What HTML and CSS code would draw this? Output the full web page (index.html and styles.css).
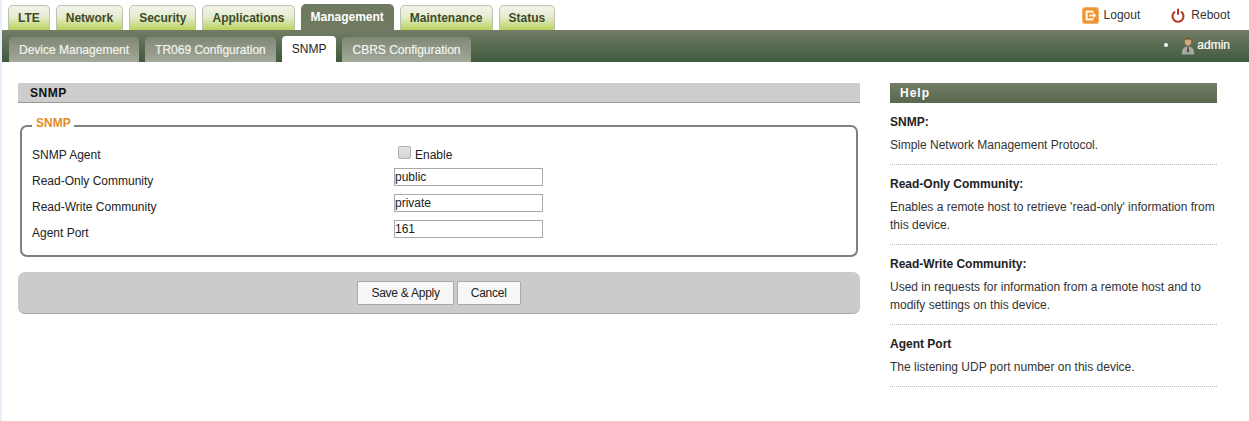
FILE: index.html
```html
<!DOCTYPE html>
<html lang="en">
<head>
<meta charset="utf-8">
<title>SNMP</title>
<link rel="stylesheet" href="styles.css">
</head>
<body>
<div class="page">
  <header>
    <div class="topbar">
      <nav class="tabs">
        <a class="tab">LTE</a>
        <a class="tab">Network</a>
        <a class="tab">Security</a>
        <a class="tab">Applications</a>
        <a class="tab active">Management</a>
        <a class="tab">Maintenance</a>
        <a class="tab">Status</a>
      </nav>
      <div class="actions">
        <a class="action logout">
          <svg class="icon" width="17" height="17" viewBox="0 0 17 17"><rect x="0.6" y="0.6" width="15.8" height="15.800" rx="2.5" fill="#eb8f2e" stroke="#f3b26a" stroke-width="1.2"/><path d="M3.500 3.500h8v2.200H5.700v5.600h5.800v2.200h-8z" fill="#fff3e0"/><path d="M7 7.400h4.200V5.500l3.300 3-3.300 3V9.600H7z" fill="#fff3e0"/></svg>
          Logout
        </a>
        <a class="action reboot">
          <svg class="icon" width="14" height="15" viewBox="0 0 14 15"><path d="M4 3.600a5.500 5.500 0 1 0 6 0" fill="none" stroke="#b5311f" stroke-width="2"/><path d="M7 .8v6" stroke="#b5311f" stroke-width="2"/></svg>
          Reboot
        </a>
      </div>
    </div>
    <div class="subbar">
      <nav class="subtabs">
        <a class="subtab">Device Management</a>
        <a class="subtab">TR069 Configuration</a>
        <a class="subtab active">SNMP</a>
        <a class="subtab">CBRS Configuration</a>
      </nav>
      <div class="user">
        <span class="dot"></span>
        <svg class="usericon" width="14" height="19" viewBox="0 0 14 19"><ellipse cx="7" cy="5.500" rx="3.200" ry="4" fill="#d9a77c"/><path d="M3.800 4.800C3.600 .2 10.400 .2 10.200 4.800 9 3.200 5 3.200 3.800 4.800z" fill="#7d5230"/><path d="M.8 18.500c0-5.500 2.200-8 6.200-8s6.200 2.500 6.200 8z" fill="#a3aba3"/><path d="M6.400 10.500h1.200l.5 5-1.100 1.200-1.100-1.200z" fill="#5b4a3a"/></svg>
        <span>admin</span>
      </div>
    </div>
  </header>
  <div class="content">
    <main class="main">
      <h2 class="section-title">SNMP</h2>
      <fieldset class="panel">
        <legend>SNMP</legend>
        <div class="row"><label>SNMP Agent</label><span class="check"><input type="checkbox"><span>Enable</span></span></div>
        <div class="row"><label>Read-Only Community</label><input class="text" type="text" value="public"></div>
        <div class="row"><label>Read-Write Community</label><input class="text" type="text" value="private"></div>
        <div class="row"><label>Agent Port</label><input class="text" type="text" value="161"></div>
      </fieldset>
      <div class="buttons">
        <button type="button">Save &amp; Apply</button>
        <button type="button">Cancel</button>
      </div>
    </main>
    <aside class="help">
      <h2 class="help-title">Help</h2>
      <dl>
        <div class="help-item"><dt>SNMP:</dt><dd>Simple Network Management Protocol.</dd></div>
        <div class="help-item"><dt>Read-Only Community:</dt><dd>Enables a remote host to retrieve 'read-only' information from this device.</dd></div>
        <div class="help-item"><dt>Read-Write Community:</dt><dd>Used in requests for information from a remote host and to modify settings on this device.</dd></div>
        <div class="help-item"><dt>Agent Port</dt><dd>The listening UDP port number on this device.</dd></div>
      </dl>
    </aside>
  </div>
</div>
</body>
</html>
```
FILE: styles.css
```css
* { box-sizing: border-box; }
html, body { height: 100%; }
body {
  margin: 0;
  background: #e9effa;
  font-family: "Liberation Sans", Arial, sans-serif;
  font-size: 12px;
  color: #222;
  overflow: hidden;
}
.page {
  margin-left: 2px;
  height: 421px;
  background: #fff;
}
.topbar {
  height: 30px;
  display: flex;
  justify-content: space-between;
  align-items: flex-end;
}
.tabs {
  display: flex;
  align-items: flex-end;
  gap: 6px;
  padding-left: 6px;
}
.tab {
  height: 25px;
  padding: 0 9px;
  line-height: 25px;
  font-weight: bold;
  color: #3d4a2c;
  background: linear-gradient(#f2f4ec 0%, #e6eccf 45%, #b9d25c 100%);
  border: 1px solid #bcc2b0;
  border-bottom: 0;
  border-radius: 5px 5px 0 0;
}
.tab.active {
  height: 26px;
  line-height: 25px;
  color: #fff;
  background: #6f7a60;
  border-color: #6f7a60;
}
.actions {
  display: flex;
  align-items: center;
  height: 30px;
  padding-right: 19px;
  color: #333;
}
.action {
  display: flex;
  align-items: center;
}
.logout { gap: 5px; margin-right: 31px; }
.reboot { gap: 6px; }
.icon { flex: none; }
.subbar {
  height: 32px;
  display: flex;
  justify-content: space-between;
  background: linear-gradient(#737c66, #3f5a3d);
}
.subtabs {
  display: flex;
  align-items: flex-end;
  gap: 6px;
  padding-left: 7px;
}
.subtab {
  height: 25px;
  padding: 0 10px;
  line-height: 26px;
  color: #f2f4ee;
  -webkit-text-stroke: 0.2px #f2f4ee;
  background: linear-gradient(#7f8775, #a3a99a);
  border-radius: 4px 4px 0 0;
}
.subtab.active {
  height: 26px;
  color: #222;
  -webkit-text-stroke: 0;
  background: #fff;
}
.user {
  display: flex;
  align-items: center;
  height: 30px;
  padding-right: 19px;
  color: #fff;
  -webkit-text-stroke: 0.2px #fff;
}
.dot {
  width: 4px;
  height: 4px;
  border-radius: 50%;
  background: #fff;
  margin-right: 13px;
}
.usericon { margin-right: 2px; }
.content {
  display: flex;
  align-items: flex-start;
  padding: 21px 0 0 16px;
}
.main { width: 842px; }
.section-title {
  margin: 0;
  height: 20px;
  padding-left: 12px;
  line-height: 20px;
  font-size: 12px;
  font-weight: bold;
  letter-spacing: 0.5px;
  color: #111;
  background: #cdcdcd;
  border-bottom: 1px solid #999;
}
.panel {
  margin: 14px 2px 0;
  padding: 7px 10px 11px;
  height: 140px;
  min-width: 0;
  border: 2px solid #808080;
  border-radius: 7px;
}
legend {
  padding: 0 3px 6px 4px;
  font-weight: bold;
  color: #e58b2c;
  line-height: 12px;
}
.row {
  display: flex;
  align-items: center;
  height: 26px;
}
.row label {
  width: 362px;
  flex: none;
  color: #222;
}
.check {
  display: flex;
  align-items: center;
  padding-left: 4px;
}
.check input {
  appearance: none;
  width: 13px;
  height: 13px;
  margin: 0 4px 5px 0;
  background: linear-gradient(#e4e4e4, #d4d4d4);
  border: 1px solid #b0b0b0;
  border-radius: 2px;
}
.text {
  width: 149px;
  height: 18px;
  margin-bottom: 8px;
  padding: 0;
  border: 1px solid #a9a9a9;
  font-family: inherit;
  font-size: 12px;
  color: #222;
  background: #fff;
}
.buttons {
  margin-top: 15px;
  height: 42px;
  display: flex;
  justify-content: center;
  align-items: center;
  gap: 3px;
  background: #cbcbcb;
  border-bottom: 1px solid #aaa;
  border-radius: 7px;
}
button {
  height: 24px;
  padding: 0 13px;
  font-family: inherit;
  font-size: 12px;
  letter-spacing: -0.25px;
  color: #222;
  background: #f7f7f7;
  border: 1px solid #aaa;
  border-radius: 1px;
}
.help {
  width: 327px;
  margin-left: 30px;
}
.help-title {
  margin: 0;
  height: 20px;
  padding-left: 10px;
  line-height: 20px;
  font-size: 12px;
  font-weight: bold;
  letter-spacing: 1px;
  color: #fff;
  background: linear-gradient(#747d68, #56684d);
}
dl { margin: 0; }
.help-item {
  padding: 10px 0 10px;
  border-bottom: 1px dotted #bbb;
  line-height: 18px;
}
.help-item dt {
  font-weight: bold;
  color: #222;
  margin-bottom: 5px;
}
.help-item dd {
  margin: 0;
  color: #333;
}
```
